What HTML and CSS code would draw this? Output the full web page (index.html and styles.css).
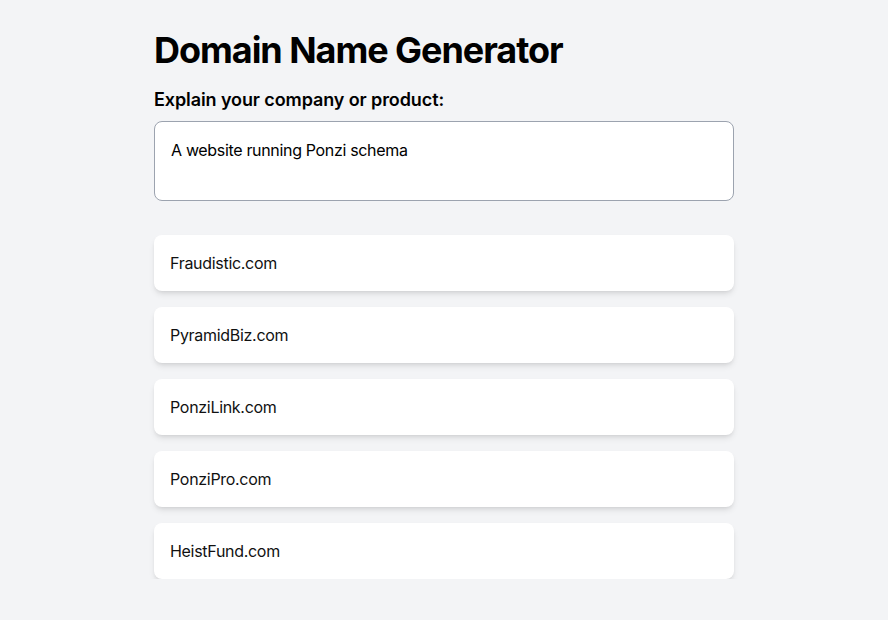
FILE: index.html
```html
<!DOCTYPE html>
<html lang="en">
<head>
<meta charset="utf-8">
<title>Domain Name Generator</title>
<link rel="stylesheet" href="styles.css">
</head>
<body>
<main class="container">
  <h1 class="title">Domain Name Generator</h1>
  <label class="label" for="desc">Explain your company or product:</label>
  <textarea id="desc" class="input">A website running Ponzi schema</textarea>
  <ul class="results">
    <li class="card">Fraudistic.com</li>
    <li class="card">PyramidBiz.com</li>
    <li class="card">PonziLink.com</li>
    <li class="card">PonziPro.com</li>
    <li class="card">HeistFund.com</li>
  </ul>
</main>
</body>
</html>
```
FILE: styles.css
```css
* { box-sizing: border-box; }
html, body {
  margin: 0;
  padding: 0;
  background: #f3f4f6;
  font-family: Inter, "Noto Sans", sans-serif;
  color: #000;
}
.container {
  width: 580px;
  margin: 0 auto;
  padding-top: 30px;
  display: flex;
  flex-direction: column;
}
.title {
  margin: 0 0 16px 0;
  font-size: 36px;
  line-height: 40px;
  font-weight: 700;
  letter-spacing: -1.05px;
}
.label {
  display: block;
  font-size: 18px;
  line-height: 28px;
  font-weight: 600;
  letter-spacing: -0.1px;
  margin-bottom: 7px;
}
.input {
  display: block;
  width: 100%;
  height: 80px;
  padding: 16px;
  border: 1px solid #9ca3af;
  border-radius: 8px;
  background: #fff;
  font-family: Inter, "Noto Sans", sans-serif;
  font-size: 16px;
  line-height: 24px;
  letter-spacing: -0.33px;
  color: #000;
  resize: none;
  outline: none;
  margin: 0 0 34px 0;
}
.results {
  list-style: none;
  margin: 0;
  padding: 0;
  display: flex;
  flex-direction: column;
  gap: 16px;
}
.card {
  background: #fff;
  border-radius: 8px;
  padding: 16px;
  font-size: 16px;
  line-height: 24px;
  letter-spacing: -0.3px;
  color: #111;
  box-shadow: 0 4px 6px -1px rgba(0,0,0,0.1), 0 2px 4px -2px rgba(0,0,0,0.1);
}
```
